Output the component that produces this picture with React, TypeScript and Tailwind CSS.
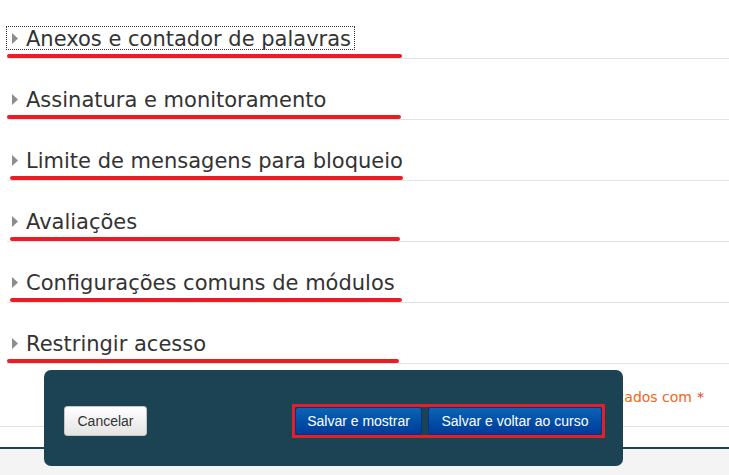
import React from 'react';

type Section = { title: string; bar: number; barLeft: number; focused?: boolean };

const sections: Section[] = [
  { title: 'Anexos e contador de palavras', bar: 395, barLeft: 0, focused: true },
  { title: 'Assinatura e monitoramento', bar: 394, barLeft: 0 },
  { title: 'Limite de mensagens para bloqueio', bar: 393, barLeft: 3 },
  { title: 'Avaliações', bar: 390, barLeft: 3 },
  { title: 'Configurações comuns de módulos', bar: 392, barLeft: 3 },
  { title: 'Restringir acesso', bar: 392, barLeft: 0 },
];

function Caret() {
  return (
    <svg width="6" height="11" viewBox="0 0 6 11" className="mt-[6px] shrink-0">
      <path d="M0 0 L6 5.5 L0 11 Z" fill="#8c8c8c" />
    </svg>
  );
}

export default function App() {
  return (
    <div className="relative h-[475px] overflow-hidden bg-white font-['DejaVu_Sans',Verdana,sans-serif] text-[#333]">
      {/* collapsed fieldsets */}
      <div className="pl-[7px]">
        {sections.map((s, i) => (
          <div
            key={s.title}
            className={`flex flex-col border-b border-[#e3e3e3] ${i === 0 ? 'pt-[27px]' : 'pt-[29px]'}`}
          >
            <div className="h-[27px]">
              <a
                className={`inline-flex h-[22px] items-start gap-[8px] pl-[5px] pr-[3px] text-[21px] ${
                  s.focused ? 'outline outline-1 outline-dotted outline-[#333]' : ''
                }`}
              >
                <Caret />
                <span className="leading-[25px]">{s.title}</span>
              </a>
            </div>
            <div
              className="h-[4px] rounded-full bg-[#ed1c24]"
              style={{ width: s.bar, marginLeft: s.barLeft }}
            />
          </div>
        ))}
      </div>

      {/* required note */}
      <div className="flex h-[63px] items-start justify-end border-b border-[#e3e3e3] pr-[25px] pt-[24px] text-[14px] leading-[18px] text-[#f26522]">
        Há campos obrigatórios neste formulário marcados com <span className="ml-[5px] text-[#e8412c]">*</span>
      </div>
      <div className="h-[20px] bg-white" />
      <div className="h-full border-t-2 border-[#1b4353] bg-[#f4f4f4]" />

      {/* sticky footer panel */}
      <div className="absolute left-[44px] top-[370px] flex h-[96px] w-[579px] items-center justify-between rounded-[7px] bg-[#1b4353] pl-[20px] pr-[18px] pt-[6px] font-['Liberation_Sans',Arial,sans-serif] text-[14px]">
        <button className="h-[30px] w-[83px] rounded-[3px] border border-[#c6c6c6] bg-gradient-to-b from-white to-[#e4e4e4] text-[#333]">
          Cancelar
        </button>
        <div className="flex h-[34px] gap-[6px] border-[3px] border-[#e81e26]">
          <button className="h-[28px] w-[127px] rounded-[3px] border border-[#003580] bg-gradient-to-b from-[#0d63b4] to-[#003b9a] text-white">
            Salvar e mostrar
          </button>
          <button className="h-[28px] w-[174px] rounded-[3px] border border-[#003580] bg-gradient-to-b from-[#0d63b4] to-[#003b9a] text-white">
            Salvar e voltar ao curso
          </button>
        </div>
      </div>
    </div>
  );
}
